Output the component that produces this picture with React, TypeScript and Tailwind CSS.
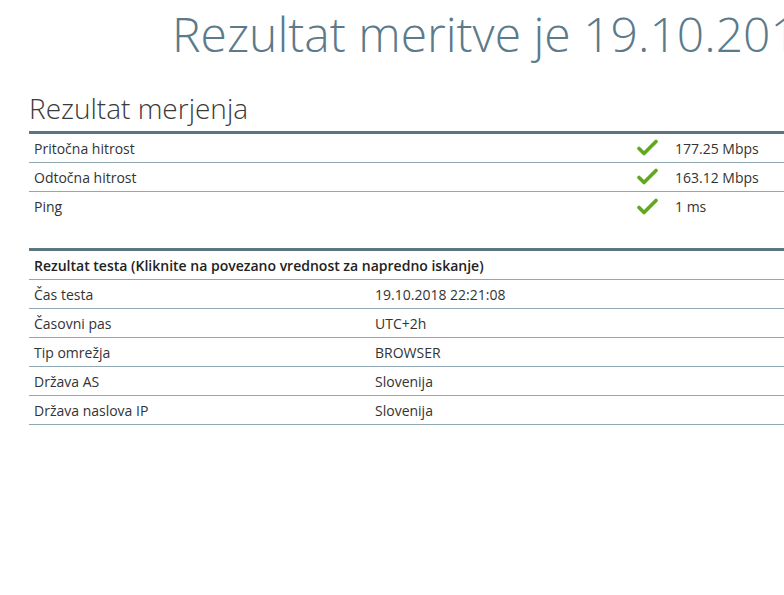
const font = { fontFamily: '"Open Sans", "Noto Sans", sans-serif' };

const speeds = [
  { label: 'Pritočna hitrost', value: '177.25 Mbps' },
  { label: 'Odtočna hitrost', value: '163.12 Mbps' },
  { label: 'Ping', value: '1 ms' },
];

const details = [
  { label: 'Čas testa', value: '19.10.2018 22:21:08' },
  { label: 'Časovni pas', value: 'UTC+2h' },
  { label: 'Tip omrežja', value: 'BROWSER' },
  { label: 'Država AS', value: 'Slovenija' },
  { label: 'Država naslova IP', value: 'Slovenija' },
];

function Check() {
  return (
    <svg className="w-[22px] h-[18px]" viewBox="0 0 22 18" fill="none">
      <path
        d="M3 9.5l5 5L20 2.5"
        stroke="#62a81f"
        strokeWidth={3.6}
        strokeLinecap="round"
        strokeLinejoin="round"
      />
    </svg>
  );
}

export default function App() {
  return (
    <div
      className="w-[784px] h-[595px] overflow-hidden bg-white text-[#333] text-[14px]"
      style={font}
    >
      <div className="w-[1200px]">
        <h1 className="pl-[172px] pt-[3px] text-[48px] leading-[62px] font-light text-[#5b7a8a] whitespace-nowrap">
          Rezultat meritve je 19.10.2018 22:21:08
        </h1>

        <h2 className="ml-[29px] mt-[25px] text-[28px] leading-[36px] font-light text-[#3a3a3a]">
          Rezultat merjenja
        </h2>

        <div className="ml-[29px] mt-[5px] w-[900px] border-t-[3px] border-[#5b7583]">
          {speeds.map((row, i) => (
            <div
              key={row.label}
              className={`flex items-center h-[29px] ${
                i < speeds.length - 1 ? 'border-b border-[#8fa6b3]' : ''
              }`}
            >
              <div className="w-[607px] pl-[5px]">{row.label}</div>
              <div className="w-[39px] flex items-center">
                <Check />
              </div>
              <div>{row.value}</div>
            </div>
          ))}
        </div>

        <div className="ml-[29px] mt-[27px] w-[900px] border-t-[3px] border-[#5b7583]">
          <div className="flex items-center h-[29px] border-b border-[#8fa6b3] pl-[5px] font-semibold text-[#222]">
            Rezultat testa (Kliknite na povezano vrednost za napredno iskanje)
          </div>
          {details.map((row) => (
            <div
              key={row.label}
              className="flex items-center h-[29px] border-b border-[#8fa6b3]"
            >
              <div className="w-[346px] pl-[5px]">{row.label}</div>
              <div>{row.value}</div>
            </div>
          ))}
        </div>
      </div>
    </div>
  );
}
